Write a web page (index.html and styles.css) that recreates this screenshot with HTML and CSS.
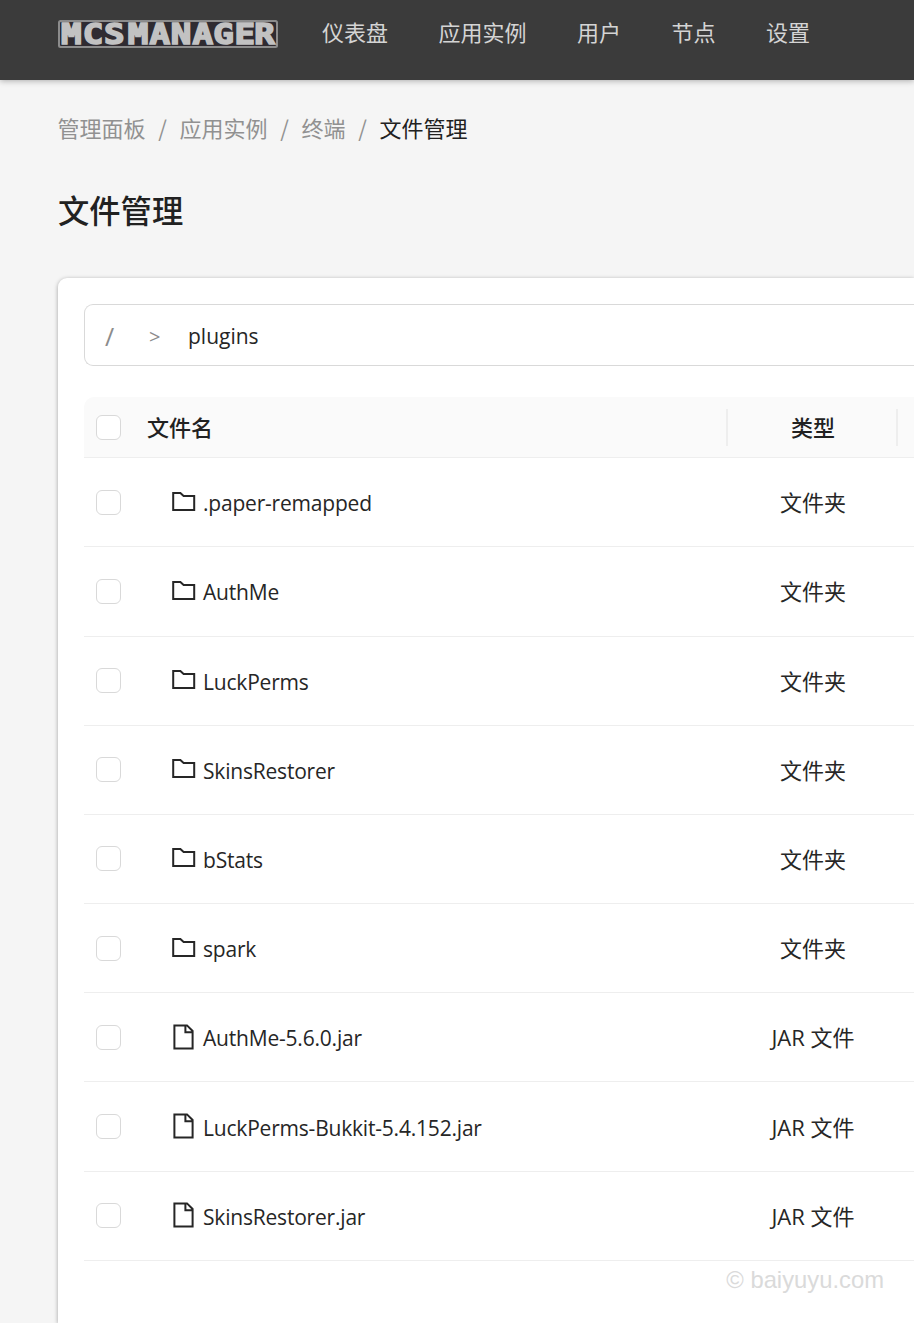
FILE: index.html
```html
<!DOCTYPE html>
<html lang="zh-CN">
<head>
    <meta charset="UTF-8">
    <meta name="viewport" content="width=device-width, initial-scale=1.0">
    <title>文件管理</title>
    <link rel="stylesheet" href="styles.css">
</head>
<body>
    <svg class="defs" width="0" height="0">
        <symbol id="folder" viewBox="0 0 24 26">
            <path d="M1.2 3.9H8.4L11.6 6.9H22.2V21.1H1.2Z" fill="none" stroke="currentColor" stroke-width="2"/>
        </symbol>
        <symbol id="file" viewBox="0 0 24 26">
            <path d="M2.4 1.4H15L20.6 7V24.4H2.4Z M13.4 1.4V8.2H20.6" fill="none" stroke="currentColor" stroke-width="2"/>
        </symbol>
    </svg>

    <header class="header">
        <svg class="logo" width="220" height="28" viewBox="0 0 220 28">
            <rect class="logo-edge" width="220" height="28" rx="2.5"/>
            <rect class="logo-back" x="2" y="2" width="216" height="24" rx="1"/>
            <text class="logo-text" transform="scale(1.22 1)" y="24.3" x="2.4 20.2 37.8 57.2 75 92.4 110.2 127.2 144.6 160.8">MCSMANAGER</text>
        </svg>
        <nav class="nav">
            <a>仪表盘</a>
            <a>应用实例</a>
            <a>用户</a>
            <a>节点</a>
            <a>设置</a>
        </nav>
    </header>

    <main class="main">
        <div class="breadcrumb">
            <span>管理面板</span><i>/</i><span>应用实例</span><i>/</i><span>终端</span><i>/</i><span class="current">文件管理</span>
        </div>
        <h1 class="title">文件管理</h1>

        <div class="card">
            <div class="path">
                <span class="root">/</span>
                <span class="arrow">&gt;</span>
                <span class="dir">plugins</span>
            </div>

            <div class="table">
                <div class="row head">
                    <span class="check"></span>
                    <div class="name">文件名</div>
                    <div class="type">类型</div>
                </div>
                <div class="row">
                    <span class="check"></span>
                    <div class="name"><svg class="icon"><use href="#folder"/></svg><span>.paper-remapped</span></div>
                    <div class="type">文件夹</div>
                </div>
                <div class="row">
                    <span class="check"></span>
                    <div class="name"><svg class="icon"><use href="#folder"/></svg><span>AuthMe</span></div>
                    <div class="type">文件夹</div>
                </div>
                <div class="row">
                    <span class="check"></span>
                    <div class="name"><svg class="icon"><use href="#folder"/></svg><span>LuckPerms</span></div>
                    <div class="type">文件夹</div>
                </div>
                <div class="row">
                    <span class="check"></span>
                    <div class="name"><svg class="icon"><use href="#folder"/></svg><span>SkinsRestorer</span></div>
                    <div class="type">文件夹</div>
                </div>
                <div class="row">
                    <span class="check"></span>
                    <div class="name"><svg class="icon"><use href="#folder"/></svg><span>bStats</span></div>
                    <div class="type">文件夹</div>
                </div>
                <div class="row">
                    <span class="check"></span>
                    <div class="name"><svg class="icon"><use href="#folder"/></svg><span>spark</span></div>
                    <div class="type">文件夹</div>
                </div>
                <div class="row">
                    <span class="check"></span>
                    <div class="name"><svg class="icon"><use href="#file"/></svg><span>AuthMe-5.6.0.jar</span></div>
                    <div class="type">JAR 文件</div>
                </div>
                <div class="row">
                    <span class="check"></span>
                    <div class="name"><svg class="icon"><use href="#file"/></svg><span>LuckPerms-Bukkit-5.4.152.jar</span></div>
                    <div class="type">JAR 文件</div>
                </div>
                <div class="row">
                    <span class="check"></span>
                    <div class="name"><svg class="icon"><use href="#file"/></svg><span>SkinsRestorer.jar</span></div>
                    <div class="type">JAR 文件</div>
                </div>
            </div>
        </div>
    </main>
    <div class="watermark">© baiyuyu.com</div>
</body>
</html>
```
FILE: styles.css
```css
* {
    box-sizing: border-box;
}
body {
    margin: 0;
    height: 1323px;
    overflow: hidden;
    display: flex;
    flex-direction: column;
    background: #f5f5f5;
    color: #262626;
    font-family: "Open Sans", "Noto Sans CJK SC", sans-serif;
    font-size: 21px;
    line-height: 32px;
}
.defs {
    position: absolute;
}

/* top bar */
.header {
    flex: none;
    height: 80px;
    padding: 15px 0 0 58px;
    display: flex;
    align-items: flex-start;
    background: #3b3b3b;
    box-shadow: 0 1px 6px rgba(0, 0, 0, 0.3);
}
.logo {
    flex: none;
    margin-top: 5px;
    overflow: visible;
}
.logo-edge {
    fill: #8c8c8c;
}
.logo-back {
    fill: #2f2b31;
}
.logo-text {
    font-family: "DejaVu Sans Mono", monospace;
    font-weight: bold;
    font-size: 28px;
    fill: #c2c2c2;
    stroke: #c2c2c2;
    stroke-width: 1.6px;
}
.nav {
    display: flex;
    gap: 50.5px;
    margin-left: 44px;
    color: #d4d4d4;
    font-family: "Noto Sans CJK SC", sans-serif;
    font-size: 22px;
    white-space: nowrap;
}

.main {
    flex: 1;
    display: flex;
    flex-direction: column;
    padding-left: 58px;
}
.breadcrumb {
    display: flex;
    margin-top: 31px;
    margin-left: -0.5px;
    font-family: "Noto Sans CJK SC", sans-serif;
    font-size: 22px;
    color: #919191;
    white-space: nowrap;
}
.breadcrumb i {
    width: 34px;
    text-align: center;
    font-style: normal;
}
.breadcrumb .current {
    color: #212121;
}
.title {
    margin: 44px 0 0;
    color: #212121;
    font-family: "Noto Sans CJK SC", sans-serif;
    font-size: 31.3px;
    line-height: 46px;
    font-weight: 500;
}

/* file list */
.card {
    flex: 1;
    margin-top: 45px;
    padding: 26px 0 0 26px;
    background: #fff;
    border-radius: 9px 0 0 0;
    box-shadow: 0 1px 4px rgba(0, 0, 0, 0.35);
}
.path {
    display: flex;
    align-items: center;
    height: 62px;
    padding: 2px 0 0 20px;
    border: 1px solid #d9d9d9;
    border-right: 0;
    border-radius: 9px 0 0 9px;
}
.root {
    width: 44px;
    color: #8c8c8c;
    font-size: 25px;
}
.arrow {
    width: 39px;
    padding-top: 2px;
    color: #8c8c8c;
    font-size: 20px;
}
.table {
    margin-top: 31px;
}
.row {
    display: flex;
    align-items: center;
    height: 89.2px;
    padding-left: 12px;
    border-bottom: 1px solid #eee;
}
.check {
    flex: none;
    width: 25px;
    height: 25px;
    border: 1px solid #d9d9d9;
    border-radius: 6px;
    background: #fff;
}
.name {
    display: flex;
    align-items: center;
    width: 605px;
    padding: 2px 0 0 51px;
    letter-spacing: -0.2px;
    white-space: nowrap;
}
.icon {
    width: 24px;
    height: 26px;
    margin: -3px 7px 0 0;
}
.type {
    width: 172px;
    padding-left: 2px;
    text-align: center;
    font-size: 22px;
}
.head {
    height: 61.15px;
    background: #fafafa;
    border-radius: 10px 0 0 0;
    color: #212121;
}
.head .name {
    padding: 0 0 0 26px;
    font-size: 22px;
    font-weight: 500;
    letter-spacing: 0;
}
.head .type {
    height: 37px;
    padding-top: 2px;
    border: solid #eee;
    border-width: 0 2px;
    font-weight: 500;
}

.watermark {
    position: absolute;
    right: 30px;
    bottom: 27px;
    color: #dadada;
    font-family: "Liberation Sans", sans-serif;
    font-size: 23.8px;
}
```
